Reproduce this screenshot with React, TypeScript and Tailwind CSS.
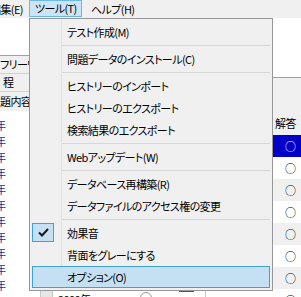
import React from 'react';

type Entry = { label?: string; sep?: boolean; checked?: boolean; hot?: boolean };

const entries: Entry[] = [
  { label: 'テスト作成(M)' },
  { sep: true },
  { label: '問題データのインストール(C)' },
  { sep: true },
  { label: 'ヒストリーのインポート' },
  { label: 'ヒストリーのエクスポート' },
  { label: '検索結果のエクスポート' },
  { sep: true },
  { label: 'Webアップデート(W)' },
  { sep: true },
  { label: 'データベース再構築(R)' },
  { label: 'データファイルのアクセス権の変更' },
  { sep: true },
  { label: '効果音', checked: true },
  { label: '背面をグレーにする' },
  { label: 'オプション(O)', hot: true },
];

const yearRows = Array.from({ length: 11 });
const answerRows = Array.from({ length: 8 });

function ToolsMenu() {
  return (
    <div className="absolute left-[29px] top-[18px] w-[244px] border border-[#979797] bg-[#f0f0f0] py-[2px]">
      {/* gutter line */}
      <div className="absolute bottom-0 left-[31px] top-0 w-px bg-[#e2e2e2]" />
      {entries.map((e, i) =>
        e.sep ? (
          <div key={i} className="flex h-[5px] items-center pl-[31px] pr-[2px]">
            <div className="h-px w-full bg-[#d7d7d7]" />
          </div>
        ) : (
          <div key={i} className="relative flex h-[22px] items-center">
            {e.hot && (
              <div className="absolute inset-y-0 left-[2px] right-[2px] border border-[#3ba2da] bg-[#c5e0f2]" />
            )}
            {e.checked && (
              <div className="absolute left-[2px] top-[1px] flex h-[19px] w-[22px] items-center justify-center border border-[#3ba2da] bg-[#c5e0f2]">
                <svg width="11" height="9" viewBox="0 0 11 9">
                  <path d="M1 4.5 L4 7.5 L10 1" fill="none" stroke="#1a1a1a" strokeWidth="2" />
                </svg>
              </div>
            )}
            <span className="relative whitespace-nowrap pl-[37px] text-[11px] text-black">{e.label}</span>
          </div>
        ),
      )}
    </div>
  );
}

export default function App() {
  return (
    <div
      className="relative h-[297px] w-[301px] overflow-hidden bg-white tracking-[-0.6px] [font-feature-settings:'palt']"
      style={{ fontFamily: '"Noto Sans CJK JP", "Noto Sans", sans-serif' }}
    >
      {/* menu bar */}
      <div className="flex h-[18px] items-center bg-[#f0f0f0] text-[11px] text-black">
        <span className="-ml-[10px] w-[39px] shrink-0 whitespace-nowrap">編集(E)</span>
        <span className="flex h-[17px] w-[53px] shrink-0 items-center self-start whitespace-nowrap border border-[#6cb8e6] bg-[#cce4f7] pl-[5px]">
          ツール(T)
        </span>
        <span className="shrink-0 whitespace-nowrap pl-[9px]">ヘルプ(H)</span>
      </div>

      {/* window body */}
      <div className="flex h-[279px] overflow-hidden">
        {/* left search pane */}
        <div className="flex w-[33px] shrink-0 flex-col">
          <div className="h-[37px] shrink-0" />
          <div className="flex h-[18px] shrink-0 items-center whitespace-nowrap border-t border-[#a0a0a0] bg-[#f0f0f0] text-[11px]">
            フリーワード
          </div>
          <div className="flex h-[19px] shrink-0 items-center border-y border-[#d0d0d0] bg-[#f0f0f0] pl-[3px] text-[11px]">
            程
          </div>
          <div className="flex h-[19px] shrink-0 items-center whitespace-nowrap bg-[#f0f0f0] text-[11px]">
            題内容
          </div>
          <div className="flex shrink-0 flex-col pt-[6px]">
            {yearRows.map((_, i) => (
              <div key={i} className="-ml-[5px] h-[16px] shrink-0 text-[11px] leading-[16px] text-[#1030a0]">
                年
              </div>
            ))}
          </div>
        </div>

        {/* result list (mostly under the menu) */}
        <div className="flex min-w-0 flex-1 flex-col">
          <div className="h-[272px] shrink-0" />
          <div className="flex h-[20px] shrink-0 items-start">
            <div className="ml-[7px] h-[20px] w-[13px] shrink-0 border border-[#c8c8c8] bg-[#e6e6e6]" />
            <span className="ml-[5px] shrink-0 whitespace-nowrap pt-[1px] text-[11px] leading-[16px]">2000年</span>
            <div className="ml-[50px] mt-[2px] h-[12px] w-[12px] shrink-0 rounded-full border border-[#9a9a9a]" />
            <div className="ml-[27px] h-[20px] w-[15px] shrink-0 border-t-2 border-[#555]" />
            <div className="ml-[11px] h-[20px] w-px shrink-0 bg-[#c8c8c8]" />
          </div>
        </div>

        {/* answer column */}
        <div className="flex w-[28px] shrink-0 flex-col">
          <div className="h-[60px] shrink-0 border-b border-[#a0a0a0]" />
          <div className="flex h-[57px] shrink-0 items-end whitespace-nowrap bg-[#f0f0f0] pb-[4px] pl-[2px] text-[11px]">
            解答
          </div>
          {answerRows.map((_, i) => (
            <div
              key={i}
              className={
                'flex h-[22px] shrink-0 items-center pl-[12px] text-[11px] ' +
                (i === 0 ? 'bg-[#0000c8] text-white' : i % 2 === 0 ? 'bg-[#f0f0f0]' : 'bg-white')
              }
            >
              ○
            </div>
          ))}
        </div>
      </div>

      <ToolsMenu />
    </div>
  );
}
